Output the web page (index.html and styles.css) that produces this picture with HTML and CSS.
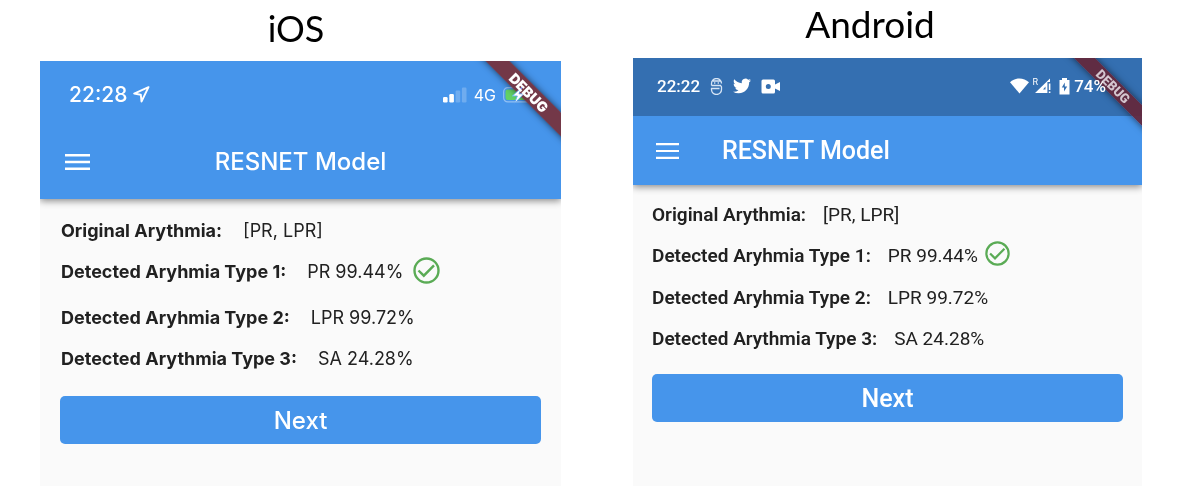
FILE: index.html
```html
<!DOCTYPE html>
<html lang="en">
<head>
<meta charset="utf-8">
<meta name="viewport" content="width=device-width, initial-scale=1">
<title>RESNET Model</title>
<link rel="stylesheet" href="styles.css">
</head>
<body>
<main class="compare">
  <section class="device ios">
    <h1 class="device-name">iOS</h1>
    <div class="screen">
      <header class="bar">
        <div class="status">
          <div class="status-group">
            <span class="clock">22:28</span>
            <svg width="17" height="17" viewBox="0 0 17 17" fill="none" stroke="#fff" stroke-width="1.900" stroke-linejoin="round"><path d="M15.500 1.200 1.200 7.600l6.600 1.100.7 6.800z"/></svg>
          </div>
          <div class="status-group right">
            <svg width="24" height="16" viewBox="0 0 24 16" fill="#fff"><rect x="0" y="10" width="4.600" height="5.500" rx="1.200"/><rect x="6.300" y="7" width="4.600" height="8.500" rx="1.200"/><g opacity=".22"><rect x="12.600" y="3.500" width="4.600" height="12" rx="1.200"/><rect x="18.900" y="0.500" width="4.600" height="15" rx="1.200"/></g></svg>
            <span class="network">4G</span>
            <span class="battery">
              <svg width="32" height="18" viewBox="0 0 32 18"><rect x=".7" y="1.700" width="26.500" height="14.200" rx="4" fill="none" stroke="#a5cbf5" stroke-opacity=".8" stroke-width="1.200"/><rect x="2.500" y="3.500" width="21.500" height="10.600" rx="2" fill="#62d166"/></svg>
              <svg class="bolt" width="32" height="18" viewBox="0 0 32 18"><path d="M19.500.5 9.300 10h5l-3 7.500L21 7.800h-5z" fill="#fff" stroke="#4695eb" stroke-width=".8"/></svg>
            </span>
          </div>
        </div>
        <div class="toolbar">
          <button class="menu" type="button" aria-label="Menu"><svg width="25" height="18" viewBox="0 0 25 18" fill="#fff"><path d="M0 1h25v2.600H0zM0 7.700h25v2.600H0zM0 14.400h25V17H0z"/></svg></button>
          <h2 class="title">RESNET Model</h2>
        </div>
      </header>
      <div class="corner"><span class="banner">DEBUG</span></div>
      <div class="content">
        <dl class="results">
          <div class="row"><dt>Original Arythmia:</dt><dd>[PR, LPR]</dd></div>
          <div class="row checked"><dt>Detected Aryhmia Type 1:</dt><dd>PR 99.44%</dd><dd class="tick"><svg viewBox="0 0 27 27" fill="none" stroke="#5aab55" stroke-width="2.400" role="img" aria-label="Correct"><circle cx="13.500" cy="13.500" r="12"/><path d="m5.500 13.500 5.300 5.200L21 8.300"/></svg></dd></div>
          <div class="row"><dt>Detected Aryhmia Type 2:</dt><dd>LPR 99.72%</dd></div>
          <div class="row"><dt>Detected Arythmia Type 3:</dt><dd>SA 24.28%</dd></div>
        </dl>
        <button class="next" type="button">Next</button>
      </div>
    </div>
  </section>

  <section class="device android">
    <h1 class="device-name">Android</h1>
    <div class="screen">
      <header class="bar">
        <div class="status">
          <div class="status-group">
            <span class="clock">22:22</span>
            <svg width="13" height="17" viewBox="0 0 13 17" fill="none" stroke="#d7e5f5" stroke-width="1.300"><path d="M1.500 7.500V5.500a5 5 0 0 1 10 0M1.500 7.500h9l1 1.500v2.300a5 5 0 0 1-10 .4v-1.200h8M3 3h7.500M4.700 4.200v1.600M8.300 4.200v1.600"/></svg>
            <svg width="18" height="18" viewBox="0 0 24 24" fill="#fff"><path d="M23.950 4.570a10 10 0 0 1-2.820.77 4.960 4.960 0 0 0 2.160-2.720c-.95.550-2 .950-3.130 1.180a4.920 4.920 0 0 0-8.380 4.480C7.690 8.090 4.070 6.130 1.640 3.160a4.820 4.820 0 0 0-.67 2.480c0 1.710.87 3.210 2.190 4.100a4.900 4.900 0 0 1-2.230-.62v.06a4.920 4.920 0 0 0 3.950 4.830 5 5 0 0 1-2.210.08 4.940 4.940 0 0 0 4.600 3.420A9.870 9.870 0 0 1 0 19.540a13.990 13.990 0 0 0 7.550 2.210c9.050 0 14-7.500 14-13.980 0-.21 0-.42-.02-.63a9.940 9.940 0 0 0 2.460-2.550z"/></svg>
            <svg width="19" height="15" viewBox="0 0 19 15" fill="#fff" fill-rule="evenodd"><path d="M2 .5h10.500a1.500 1.500 0 0 1 1.500 1.500v3.500L19 3v9l-5-2.500V13a1.500 1.500 0 0 1-1.500 1.500H2A1.500 1.500 0 0 1 .5 13V2A1.500 1.500 0 0 1 2 .5zM7.300 5a2.500 2.500 0 1 0 0 5 2.500 2.500 0 0 0 0-5z"/></svg>
          </div>
          <div class="status-group right">
            <svg width="19" height="16" viewBox="0 0 19 16" fill="#fff"><path d="M0 4.300C5.500-.8 13.500-.8 19 4.300L9.500 15.500z"/></svg>
            <span class="signal"><span class="roaming">R</span><svg width="16" height="16" viewBox="0 0 16 16" fill="#fff"><path d="M15 .5V4h-2.600v11H0zM10.500 8.500 8 11.500h2.500z" fill-rule="evenodd"/><path d="M13.800 5.500h1.600v6.500h-1.600zM13.800 13.400h1.600V15h-1.600z"/></svg></span>
            <svg class="cell" width="11" height="17" viewBox="0 0 11 17"><path d="M3 0h5v2h2.500v14.500H.5V2H3z" fill="#fff"/><path d="M5.800 4.500 2.800 9.500H5v4l3.200-5H5.800z" fill="#346fb1"/></svg>
            <span class="charge">74%</span>
          </div>
        </div>
        <div class="toolbar">
          <button class="menu" type="button" aria-label="Menu"><svg width="23" height="16" viewBox="0 0 23 16" fill="#fff"><path d="M0 0h23v2.200H0zM0 6.900h23v2.200H0zM0 13.800h23V16H0z"/></svg></button>
          <h2 class="title">RESNET Model</h2>
        </div>
      </header>
      <div class="corner"><span class="banner">DEBUG</span></div>
      <div class="content">
        <dl class="results">
          <div class="row"><dt>Original Arythmia:</dt><dd>[PR, LPR]</dd></div>
          <div class="row checked"><dt>Detected Aryhmia Type 1:</dt><dd>PR 99.44%</dd><dd class="tick"><svg viewBox="0 0 27 27" fill="none" stroke="#5aab55" stroke-width="2.400" role="img" aria-label="Correct"><circle cx="13.500" cy="13.500" r="12"/><path d="m5.500 13.500 5.300 5.200L21 8.300"/></svg></dd></div>
          <div class="row"><dt>Detected Aryhmia Type 2:</dt><dd>LPR 99.72%</dd></div>
          <div class="row"><dt>Detected Arythmia Type 3:</dt><dd>SA 24.28%</dd></div>
        </dl>
        <button class="next" type="button">Next</button>
      </div>
    </div>
  </section>
</main>
</body>
</html>
```

FILE: styles.css
```css
* { box-sizing: border-box; }

body {
  margin: 0;
  background: #fff;
}

.compare {
  display: grid;
  grid-template-columns: 521fr 509fr;
  gap: 72px;
  min-height: 100vh;
  padding: 0 43px 0 40px;
}

.device {
  display: flex;
  flex-direction: column;
  color: #212121;
}

.ios { font-family: Inter, "Liberation Sans", sans-serif; }
.android { font-family: Roboto, "Liberation Sans", sans-serif; }

.device-name {
  margin: 0;
  color: #000;
  font: 400 36px/46px Lato, "Open Sans", sans-serif;
  text-align: center;
}
.ios .device-name { padding: 5px 9px 10px 0; }
.android .device-name { padding: 1px 35px 11px 0; font-size: 37px; }

.screen {
  position: relative;
  flex: 1;
  overflow: hidden;
  background: #fafafa;
}

.bar {
  background: #4695eb;
  color: #fff;
  box-shadow: 0 2px 7px rgba(0, 0, 0, 0.45);
}

.status,
.status-group,
.toolbar,
.row {
  display: flex;
  align-items: center;
}

.status { justify-content: space-between; }

.ios .status { height: 67px; padding: 0 26px 0 29px; }
.ios .status-group { gap: 6px; }
.ios .status-group.right { gap: 7px; }
.ios .clock { font-size: 21px; font-weight: 500; }
.ios .network { font-size: 16px; }

.android .status { height: 58px; padding: 0 36px 2px 24px; background: #346fb1; }
.android .status-group { gap: 10px; }
.android .status-group.right { gap: 4px; }
.android .clock,
.android .charge { font-size: 17px; font-weight: 500; }

.signal { display: flex; align-items: flex-start; }
.roaming { margin-right: -3px; font-size: 9px; line-height: 8px; }
.cell { margin-left: 4px; }

.battery { display: grid; }
.battery svg { grid-area: 1 / 1; }

.bolt,
.charge {
  position: relative;
  z-index: 1;
  mix-blend-mode: lighten;
}

.menu {
  display: flex;
  padding: 0;
  border: 0;
  background: none;
}

.title {
  margin: 0;
  font-size: 24px;
  line-height: 30px;
  font-weight: 500;
}

.ios .toolbar { height: 71px; padding: 0 25px 4px; }
.ios .title { flex: 1; padding-right: 25px; text-align: center; }
.android .toolbar { height: 69px; padding: 1px 23px 0; gap: 43px; }
.android .title { font-size: 25px; }

.corner {
  position: absolute;
  top: 0;
  right: 0;
  width: 100px;
  height: 100px;
  overflow: hidden;
}

.banner {
  position: absolute;
  width: 140px;
  transform: rotate(45deg);
  box-shadow: 0 0 7px rgba(0, 0, 0, 0.6);
  font-weight: 900;
  text-align: center;
}
.ios .banner {
  top: 23px;
  right: -38px;
  background: rgba(117, 52, 65, 0.96);
  color: #fff;
  font-size: 14px;
  line-height: 17px;
}
.android .banner {
  top: 21px;
  right: -41px;
  background: rgba(100, 38, 58, 0.92);
  color: #d4c6cf;
  font-size: 13px;
  line-height: 15px;
}

.results { margin: 0; font-size: 18px; }
.row dt { font-weight: 700; }
.row dd { margin: 0; }
.row .tick { display: flex; }
.tick svg { display: block; width: 100%; }

.ios .content { padding: 11px 20px; }
.ios .results { padding-left: 1px; }
.ios .row { height: 41px; gap: 21px; }
.ios .row.checked { height: 46px; padding-bottom: 5px; }
.ios .tick { width: 27px; margin-left: -11px; padding-bottom: 3px; }

.android .content { padding: 9px 19px; }
.android .results { font-size: 19px; }
.android .row { height: 41px; gap: 17px; }
.android .row.checked { height: 42px; padding-bottom: 1px; }
.android .row dt { font-weight: 600; }
.android .tick { width: 25px; margin-left: -10px; padding-bottom: 4px; }

.next {
  display: block;
  width: 100%;
  height: 48px;
  padding: 0;
  border: 0;
  border-radius: 5px;
  background: #4695eb;
  color: #fff;
  font: inherit;
  font-size: 24px;
  font-weight: 500;
}
.ios .next { margin-top: 17px; }
.android .next { margin-top: 15px; font-size: 25px; }
```
